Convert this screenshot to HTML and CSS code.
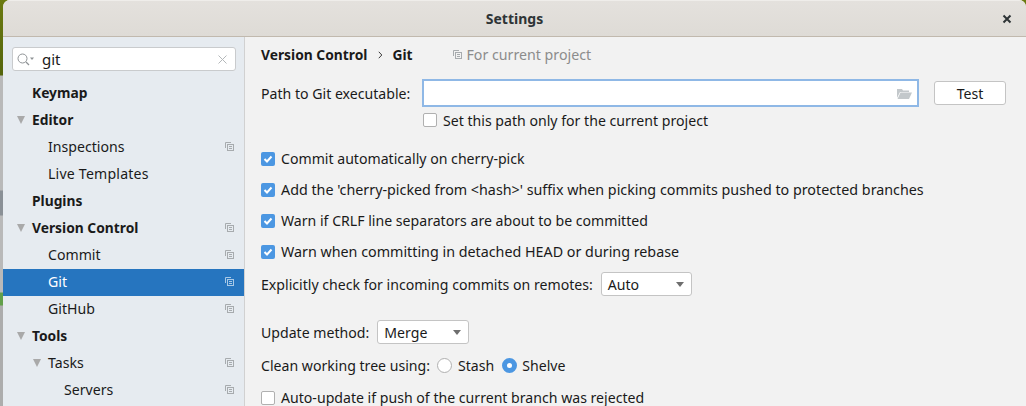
FILE: index.html
```html
<!DOCTYPE html>
<html>

<head>
	<meta charset="UTF-8">
	<meta name="viewport" content="width=device-width, initial-scale=1.0">
	<title>Settings</title>
	<link rel="stylesheet" href="styles.css">
</head>

<body>
	<svg width="0" height="0" class="defs">
		<symbol id="copy" viewBox="0 0 9 9">
			<path d="M0.5 6V0.5H6" fill="none" stroke="currentColor" />
			<rect x="2.5" y="2.5" width="6" height="6" fill="none" stroke="currentColor" />
			<path d="M4 4.500h3M4 6.500h3" stroke="currentColor" />
		</symbol>
	</svg>

	<div class="window">
		<header class="titlebar">
			<span class="title">Settings</span>
			<svg class="close" width="10" height="10" viewBox="0 0 10 10">
				<path d="M1.5 1.5l7 7M8.5 1.5l-7 7" stroke="#2e3436" stroke-width="2" />
			</svg>
		</header>

		<div class="main">
			<aside class="sidebar">
				<div class="search">
					<svg class="search-icon" width="17" height="13" viewBox="0 0 17 13">
						<circle cx="5.5" cy="5.5" r="4.5" fill="none" stroke="#8f9396" />
						<path d="M9 9l3 3" stroke="#8f9396" stroke-width="1.3" />
						<path d="M13 4.500h4l-2 2.500z" fill="#8f9396" />
					</svg>
					<span class="search-text">git</span>
					<svg class="search-clear" width="9" height="9" viewBox="0 0 9 9">
						<path d="M0.500 0.500l8 8M8.500 0.500l-8 8" stroke="#b4b8ba" />
					</svg>
				</div>

				<ul class="tree">
					<li class="node top">Keymap</li>
					<li class="node top"><i class="arrow"></i>Editor</li>
					<li class="node sub">Inspections<svg class="copy"><use href="#copy" /></svg></li>
					<li class="node sub wider">Live Templates</li>
					<li class="node top">Plugins</li>
					<li class="node top"><i class="arrow"></i>Version Control<svg class="copy"><use href="#copy" /></svg></li>
					<li class="node sub">Commit<svg class="copy"><use href="#copy" /></svg></li>
					<li class="node sub selected">Git<svg class="copy"><use href="#copy" /></svg></li>
					<li class="node sub">GitHub<svg class="copy"><use href="#copy" /></svg></li>
					<li class="node top"><i class="arrow"></i>Tools</li>
					<li class="node sub"><i class="arrow"></i>Tasks<svg class="copy"><use href="#copy" /></svg></li>
					<li class="node subsub">Servers<svg class="copy"><use href="#copy" /></svg></li>
				</ul>
			</aside>

			<section class="content">
				<div class="crumbs">
					<b>Version Control</b>
					<svg class="crumb-sep" width="5" height="8" viewBox="0 0 5 8">
						<path d="M0.800 0.800l3 3.200l-3 3.200" fill="none" stroke="#3a3a3a" />
					</svg>
					<b>Git</b>
					<span class="project"><svg class="copy"><use href="#copy" /></svg>For current project</span>
				</div>

				<div class="path-row">
					<label>Path to Git executable:</label>
					<div class="path-input">
						<svg width="15" height="11" viewBox="0 0 15 11">
							<path d="M0 1h5l1 1.500h6v1.500H3L0 10z" fill="#c3c8cb" />
							<path d="M3.500 4.500H15L12 11H0.500z" fill="#c3c8cb" />
						</svg>
					</div>
					<button class="btn">Test</button>
				</div>
				<div class="check-row indent"><i class="check"></i>Set this path only for the current project</div>

				<div class="check-row first"><i class="check on"><svg width="14" height="14" viewBox="0 0 14 14"><path d="M3.500 7l2.500 2.500l4.500-5" fill="none" stroke="#fff" stroke-width="2" /></svg></i>Commit automatically on cherry-pick</div>
				<div class="check-row wide"><i class="check on"><svg width="14" height="14" viewBox="0 0 14 14"><path d="M3.500 7l2.500 2.500l4.500-5" fill="none" stroke="#fff" stroke-width="2" /></svg></i>Add the 'cherry-picked from &lt;hash&gt;' suffix when picking commits pushed to protected branches</div>
				<div class="check-row"><i class="check on"><svg width="14" height="14" viewBox="0 0 14 14"><path d="M3.500 7l2.500 2.500l4.500-5" fill="none" stroke="#fff" stroke-width="2" /></svg></i>Warn if CRLF line separators are about to be committed</div>
				<div class="check-row wide"><i class="check on"><svg width="14" height="14" viewBox="0 0 14 14"><path d="M3.500 7l2.500 2.500l4.500-5" fill="none" stroke="#fff" stroke-width="2" /></svg></i>Warn when committing in detached HEAD or during rebase</div>

				<div class="combo-row explicit">
					<label>Explicitly check for incoming commits on remotes:</label>
					<div class="combo auto">Auto<i class="combo-arrow"></i></div>
				</div>

				<div class="combo-row update">
					<label>Update method:</label>
					<div class="combo merge">Merge<i class="combo-arrow"></i></div>
				</div>

				<div class="radio-row">
					<label>Clean working tree using:</label>
					<i class="radio"></i><span>Stash</span>
					<i class="radio on"></i><span>Shelve</span>
				</div>

				<div class="check-row last"><i class="check"></i>Auto-update if push of the current branch was rejected</div>
			</section>
		</div>
	</div>
</body>

</html>
```

FILE: styles.css
```css
html {
	box-sizing: border-box;
	font-size: 14px;
}

*,
*:before,
*:after {
	box-sizing: inherit;
}

body,
ul {
	margin: 0;
	padding: 0;
}

body {
	width: 1026px;
	height: 406px;
	overflow: hidden;
	font-family: "Noto Sans", sans-serif;
	font-size: 14.12px;
	color: #1a1a1a;
	background: linear-gradient(#6b7a10, #55650c 75px, #b9b9b9 76px, #b9b9b9 190px, #8a9096 191px, #8a9096 215px, #b9b9b9 216px, #b9b9b9 292px, #62a04a 293px, #62a04a 305px, #adadad 306px);
}

.defs {
	display: block;
	position: absolute;
}

.window {
	height: 406px;
	margin-left: 3px;
	border-radius: 7px 7px 0 0;
	overflow: hidden;
	background: #f2f2f2;
}

.titlebar {
	display: flex;
	align-items: center;
	justify-content: center;
	position: relative;
	height: 37px;
	border-top: 1px solid #efedea;
	border-bottom: 1px solid #c1b9ae;
	background: linear-gradient(#e4e1dd, #dedbd6);
}

.title {
	font-weight: 700;
	font-size: 14px;
	color: #2e3436;
}

.close {
	position: absolute;
	right: 14px;
	top: 13px;
}

.main {
	display: flex;
	height: 369px;
}

.sidebar {
	flex: none;
	width: 242px;
	border-right: 1px solid #d1d1d1;
	background: #e6ebf0;
}

.search {
	display: flex;
	align-items: center;
	height: 24px;
	margin: 10px 8px 0 9px;
	padding: 0 8px 0 4px;
	border: 1px solid #c9cbcd;
	border-radius: 3px;
	background: #fff;
}

.search-text {
	flex: 1;
	margin-left: 8px;
	font-size: 15px;
}

.tree {
	list-style: none;
	margin-top: 9px;
}

.node {
	display: flex;
	align-items: center;
	position: relative;
	height: 27px;
	padding-bottom: 2px;
}

.top {
	padding-left: 29px;
	font-size: 13.8px;
	font-weight: 700;
}

.sub {
	padding-left: 45px;
}

.wider {
	letter-spacing: 0.2px;
}

.subsub {
	padding-left: 61px;
}

.selected {
	color: #fff;
	background: #2675bf;
}

.arrow {
	position: absolute;
	margin-left: -15px;
	width: 0;
	height: 0;
	border-left: 4.500px solid transparent;
	border-right: 4.500px solid transparent;
	border-top: 8px solid #a9a9a9;
}

.copy {
	width: 9px;
	height: 9px;
	color: #a7abae;
}

.node .copy {
	position: absolute;
	right: 10px;
	top: 8px;
}

.selected .copy {
	color: #a9c9e6;
}

.content {
	flex: 1;
	padding: 0 16px;
}

.crumbs {
	display: flex;
	align-items: center;
	height: 35px;
}

.crumbs b {
	font-size: 13.8px;
	font-weight: 700;
}

.crumb-sep {
	margin: 0 9px 0 11px;
}

.project {
	display: flex;
	align-items: center;
	margin-left: 40px;
	font-size: 14.2px;
	color: #8c8c8c;
}

.project .copy {
	margin-right: 5px;
}

.path-row {
	display: flex;
	align-items: center;
	margin-top: 7px;
}

.path-row label {
	width: 161px;
	flex: none;
}

.path-input {
	display: flex;
	align-items: center;
	justify-content: flex-end;
	width: 497px;
	height: 28px;
	padding-right: 5px;
	border: 2px solid #8fb8e6;
	background: #fff;
}

.btn {
	width: 72px;
	height: 24px;
	margin-left: 15px;
	padding: 0;
	border: 1px solid #c4c4c4;
	border-radius: 3px;
	font: inherit;
	color: inherit;
	background: #fff;
}

.check-row {
	display: flex;
	align-items: center;
	height: 31px;
}

.wide {
	font-size: 14.3px;
}

.indent {
	height: 24px;
	margin-left: 162px;
	margin-top: 1px;
}

.first {
	margin-top: 11px;
}

.check {
	flex: none;
	display: block;
	width: 14px;
	height: 14px;
	margin-right: 6px;
	border: 1px solid #b0b0b0;
	border-radius: 2px;
	background: #fff;
}

.check.on {
	border: none;
	background: #4c97e2;
}

.check svg {
	display: block;
}

.combo-row {
	display: flex;
	align-items: center;
	height: 30px;
}

.combo-row label {
	margin-right: 8px;
}

.combo {
	display: flex;
	align-items: center;
	justify-content: space-between;
	height: 24px;
	padding: 0 7px 0 6px;
	border: 1px solid #c4c4c4;
	border-radius: 3px;
	background: #fff;
}

.auto {
	width: 91px;
}

.merge {
	width: 92px;
}

.combo-arrow {
	width: 0;
	height: 0;
	border-left: 4.500px solid transparent;
	border-right: 4.500px solid transparent;
	border-top: 5px solid #6e6e6e;
}

.explicit {
	margin-top: 2px;
}

.update {
	margin-top: 18px;
}

.radio-row {
	display: flex;
	align-items: center;
	height: 37px;
}

.radio {
	display: block;
	width: 15px;
	height: 15px;
	margin: 0 6px 0 7px;
	border: 1px solid #b0b0b0;
	border-radius: 50%;
	background: #fff;
}

.radio.on {
	margin-left: 8px;
	margin-right: 5px;
	border: 5px solid #4c97e2;
}

.last {
	height: 27px;
}
```
